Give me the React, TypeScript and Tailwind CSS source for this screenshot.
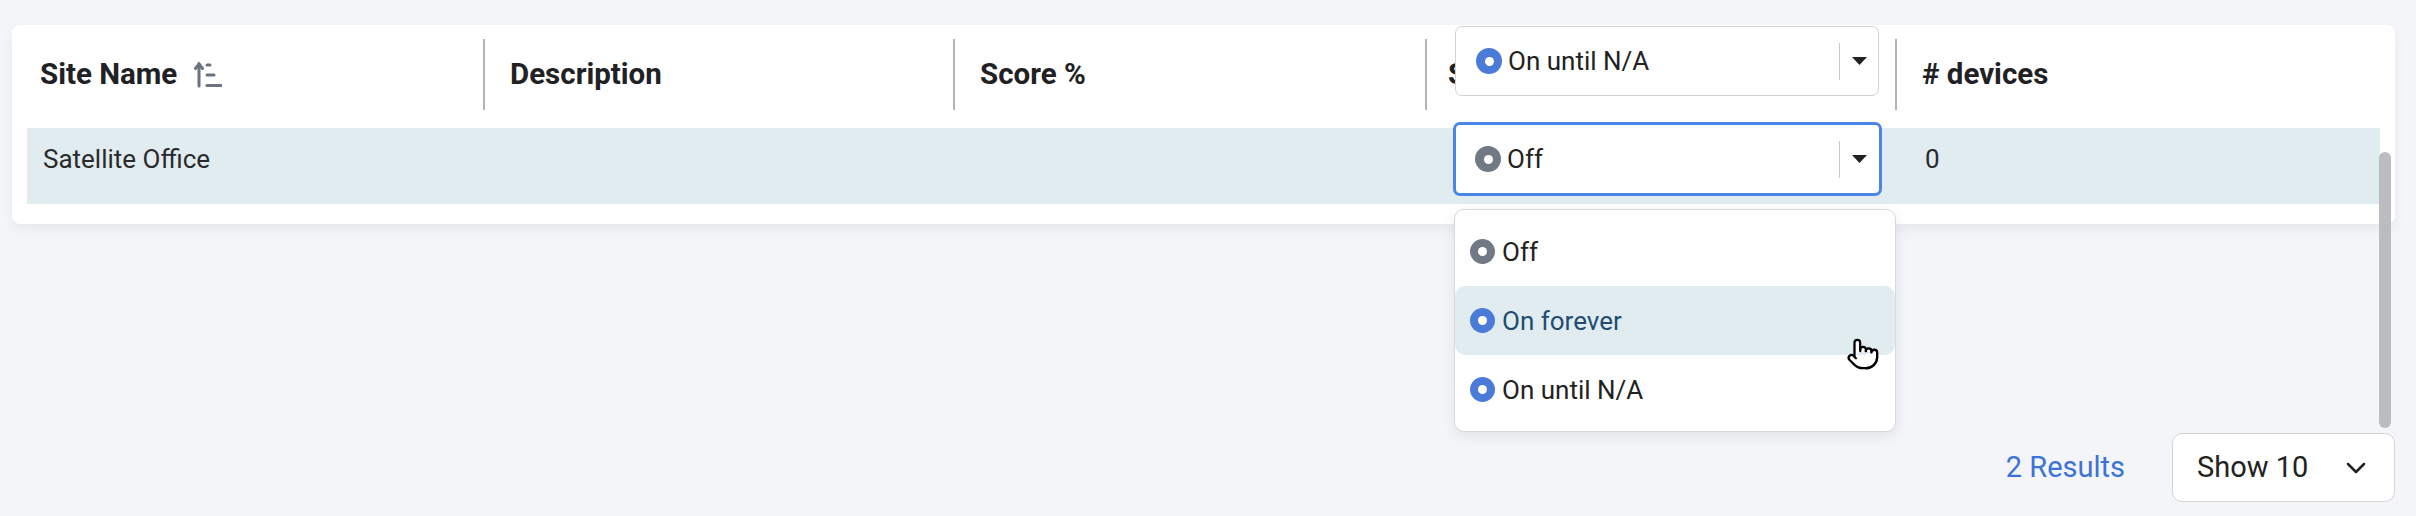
import { Pointer } from "lucide-react";

type Option = { key: string; label: string; on: boolean };

const options: Option[] = [
  { key: "off", label: "Off", on: false },
  { key: "forever", label: "On forever", on: true },
  { key: "until", label: "On until N/A", on: true },
];

function Dot({ on, small }: { on: boolean; small?: boolean }) {
  return (
    <span
      className={`flex shrink-0 items-center justify-center rounded-full ${small ? "h-[25px] w-[25px]" : "h-[26px] w-[26px]"} ${
        on ? "bg-[#4a7bd9]" : "bg-[#717985]"
      }`}
    >
      <span className="h-[9px] w-[9px] rounded-full bg-white" />
    </span>
  );
}

function Caret() {
  return (
    <svg width="15" height="8" viewBox="0 0 15 8" className="shrink-0">
      <polygon points="0,0 15,0 7.5,8" fill="#222" />
    </svg>
  );
}

function SortIcon() {
  return (
    <svg width="28" height="27" viewBox="0 0 28 27" className="shrink-0">
      <g stroke="#6b7280" strokeWidth="3" strokeLinecap="round" fill="none">
        <path d="M5 3v22" />
        <path d="M1.5 7.5L5 3l3.5 4.5" />
        <path d="M13 4h3" />
        <path d="M13 14h7" />
        <path d="M13 24.5h14" />
      </g>
    </svg>
  );
}

function StatusSelect({ value, focused }: { value: Option; focused?: boolean }) {
  return (
    <div
      className={`flex h-full w-full items-center rounded-[7px] bg-white text-[26px] font-normal ${
        focused ? "border-[3px] border-[#4a86e8] pl-[19px] pr-[12px]" : "border border-[#d3d3d3] pl-[20px] pr-[11px]"
      }`}
    >
      <Dot on={value.on} />
      <span className="ml-[6px] flex-1 text-[#222]">{value.label}</span>
      <span className="h-[37px] w-px bg-[#c9c9c9]" />
      <span className="ml-[12px]">
        <Caret />
      </span>
    </div>
  );
}

export default function App() {
  return (
    <div className="relative h-[516px] w-full overflow-hidden bg-[#f4f5f9] pl-[12px] pr-[21px] pt-[25px] font-['Roboto',sans-serif] text-[26px] leading-none text-[#222]">
      <div className="rounded-[8px] bg-white px-[15px] pb-[20px] pt-[14px] shadow-[0_6px_12px_rgba(0,0,0,0.05)]">
        {/* header */}
        <div className="grid h-[71px] grid-cols-[456px_470px_472px_470px_1fr] text-[29.5px] font-bold text-[#1f2125]">
          <div className="flex items-center gap-[17px] pl-[13px]">
            <span>Site Name</span>
            <SortIcon />
          </div>
          <div className="flex items-center border-l-2 border-[#b4b4b4] pl-[25px]">Description</div>
          <div className="flex items-center border-l-2 border-[#b4b4b4] pl-[25px]">Score %</div>
          <div className="relative flex items-center border-l-2 border-[#b4b4b4] pl-[21px]">
            <span>Status</span>
            <div className="absolute left-[28px] top-[-13px] z-10 h-[70px] w-[424px]">
              <StatusSelect value={options[2]} />
            </div>
          </div>
          <div className="flex items-center border-l-2 border-[#b4b4b4] pl-[25px]"># devices</div>
        </div>

        {/* row */}
        <div className="mt-[18px] grid h-[76px] grid-cols-[456px_470px_472px_470px_1fr] bg-[#e1ecf1] text-[#2a2a2a]">
          <div className="-mt-[6px] flex h-[74px] items-center pl-[16px]">Satellite Office</div>
          <div />
          <div />
          <div className="relative -mt-[6px] h-[74px]">
            <div className="absolute left-[28px] top-0 h-[74px] w-[429px]">
              <StatusSelect value={options[0]} focused />
            </div>
            <div className="absolute left-[29px] top-[87px] z-20 w-[442px] rounded-[10px] border border-[#d9d9d9] bg-white py-[7px] shadow-[0_4px_14px_rgba(0,0,0,0.08)]">
              {options.map((o) => (
                <div
                  key={o.key}
                  className={`flex h-[69px] items-center gap-[7px] rounded-[10px] pl-[15px] ${
                    o.key === "forever" ? "bg-[#e1ecf1] text-[#214c72]" : "text-[#222]"
                  }`}
                >
                  <Dot on={o.on} small />
                  <span>{o.label}</span>
                </div>
              ))}
            </div>
          </div>
          <div className="-mt-[6px] flex h-[74px] items-center pl-[30px]">0</div>
        </div>
      </div>

      {/* footer */}
      <div className="mt-[209px] flex items-center justify-end gap-[47px] text-[29px]">
        <span className="text-[#3b73db]">2 Results</span>
        <div className="flex h-[69px] w-[223px] items-center justify-between rounded-[10px] border border-[#d4d4d4] bg-white pl-[24px] pr-[28px] text-[#222]">
          <span>Show 10</span>
          <svg width="20" height="12" viewBox="0 0 20 12">
            <path d="M2 2l8 8 8-8" stroke="#222" strokeWidth="2.5" fill="none" strokeLinecap="round" strokeLinejoin="round" />
          </svg>
        </div>
      </div>

      {/* scroll thumb */}
      <div className="absolute left-[2379px] top-[152px] h-[276px] w-[12px] rounded-full bg-[#b4b6b9]/90" />

      {/* mouse cursor */}
      <div className="absolute left-[1846px] top-[337px] z-30">
        <Pointer size={34} fill="white" stroke="black" strokeWidth={1.6} />
      </div>
    </div>
  );
}
